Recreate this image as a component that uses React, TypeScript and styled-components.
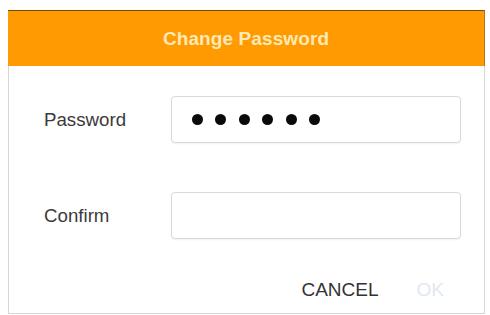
import React from "react";
import styled, { createGlobalStyle } from "styled-components";

const Global = createGlobalStyle`
  html, body { margin: 0; padding: 0; background: #ffffff; }
  body { font-family: "Liberation Sans", Arial, Helvetica, sans-serif; }
`;

const Dialog = styled.div`
  margin: 10px 0 0 8px;
  width: 477px;
  display: flex;
  flex-direction: column;
  background: #ffffff;
`;

const Header = styled.div`
  height: 55px;
  border-top: 1px solid #6e4a12;
  border-right: 1px solid #b57415;
  background: #ff9a02;
  display: flex;
  align-items: center;
  justify-content: center;
`;

const Title = styled.h1`
  margin: 0;
  font-size: 19px;
  font-weight: bold;
  color: #ffe9b3;
  letter-spacing: 0.1px;
`;

const Body = styled.div`
  border: 1px solid #d6d6d6;
  border-top: none;
  padding: 30px 23px 0 35px;
  height: 217px;
  display: flex;
  flex-direction: column;
`;

const Form = styled.div`
  display: grid;
  grid-template-columns: 127px 1fr;
  row-gap: 49px;
  align-items: center;
`;

const Label = styled.label`
  font-size: 18.7px;
  color: #3a3a3a;
`;

const Field = styled.div`
  height: 45px;
  border: 1px solid #d9d9d9;
  border-radius: 4px;
  box-shadow: 0 1px 2px rgba(0, 0, 0, 0.06);
  display: flex;
  align-items: center;
  padding-left: 20px;
  gap: 12.4px;
`;

const Dot = styled.span`
  width: 11px;
  height: 11px;
  border-radius: 50%;
  background: #0a0a0a;
`;

const Footer = styled.div`
  margin-top: auto;
  height: 38px;
  display: flex;
  justify-content: flex-end;
  align-items: flex-start;
  gap: 38px;
  padding-right: 17px;
`;

const Button = styled.button<{ $disabled?: boolean }>`
  border: none;
  background: none;
  padding: 0;
  height: 30px;
  font-family: "Liberation Sans", Arial, sans-serif;
  font-size: 19px;
  color: ${(p) => (p.$disabled ? "#dfe7ef" : "#333333")};
`;

export default function App() {
  return (
    <>
      <Global />
      <Dialog>
        <Header>
          <Title>Change Password</Title>
        </Header>
        <Body>
          <Form>
            <Label>Password</Label>
            <Field>
              {Array.from({ length: 6 }).map((_, i) => (
                <Dot key={i} />
              ))}
            </Field>
            <Label>Confirm</Label>
            <Field />
          </Form>
          <Footer>
            <Button>CANCEL</Button>
            <Button $disabled>OK</Button>
          </Footer>
        </Body>
      </Dialog>
    </>
  );
}
